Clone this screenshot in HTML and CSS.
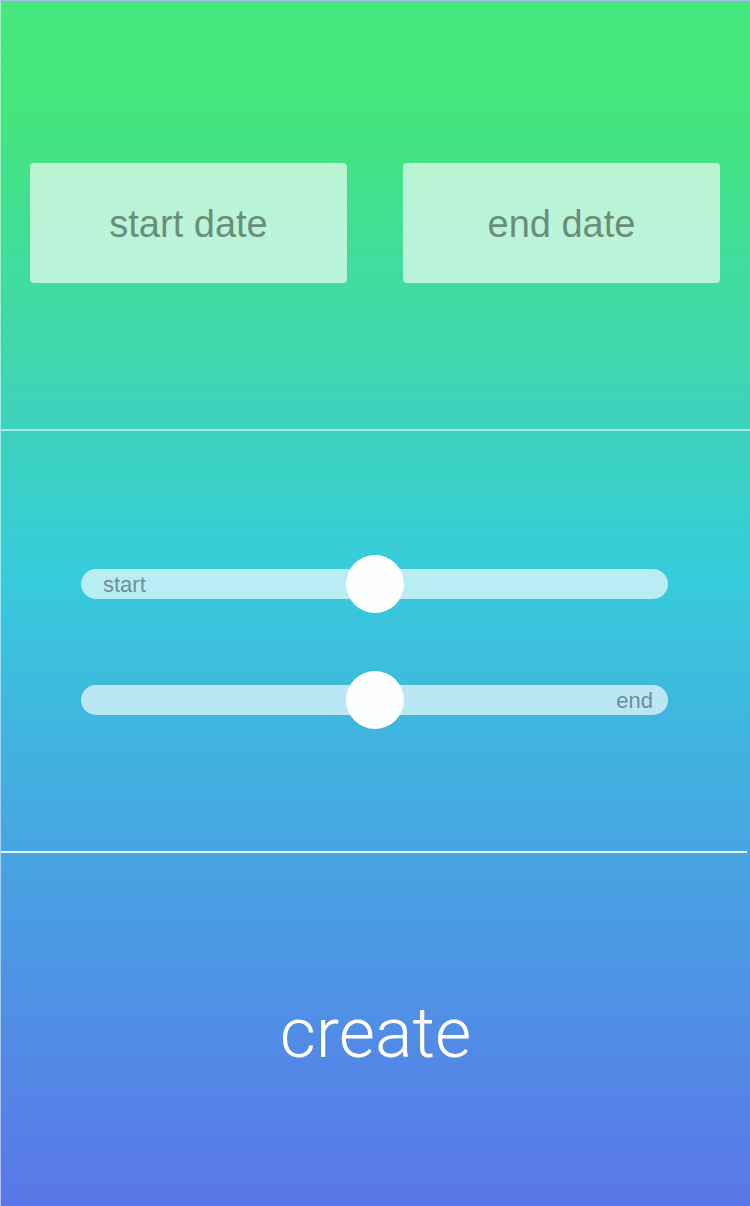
FILE: index.html
```html
<!DOCTYPE html>
<html>
<head>
<meta charset="utf-8">
<link rel="stylesheet" href="styles.css">
</head>
<body>
<div class="screen">
  <section class="dates">
    <div class="date-btn">start date</div>
    <div class="date-btn">end date</div>
  </section>
  <div class="divider"></div>
  <section class="sliders">
    <div class="slider">
      <div class="track track-start"><span class="track-label">start</span></div>
      <div class="thumb"></div>
    </div>
    <div class="slider">
      <div class="track track-end"><span class="track-label">end</span></div>
      <div class="thumb"></div>
    </div>
  </section>
  <div class="divider divider-bottom"></div>
  <section class="create">
    <span class="create-label">create</span>
  </section>
</div>
</body>
</html>
```
FILE: styles.css
```css
html, body {
  margin: 0;
  padding: 0;
}
body {
  width: 750px;
  height: 1206px;
  overflow: hidden;
  font-family: "Liberation Sans", Arial, sans-serif;
}
.screen {
  box-sizing: border-box;
  width: 750px;
  height: 1206px;
  border-top: 1px solid rgba(255, 255, 255, 0.5);
  border-left: 1px solid rgba(255, 255, 255, 0.5);
  background: linear-gradient(180deg, #45e97c 0%, #44e57f 10%, #37cbdc 48%, #42afe0 64%, #5b76e9 100%);
  display: flex;
  flex-direction: column;
}
.dates {
  box-sizing: border-box;
  height: 428px;
  display: flex;
  gap: 56px;
  padding: 162px 30px 0 29px;
}
.date-btn {
  width: 317px;
  height: 120px;
  border-radius: 4px;
  background: rgba(255, 255, 255, 0.64);
  color: #6b8e78;
  font-size: 38px;
  display: flex;
  align-items: center;
  justify-content: center;
  padding-top: 3px;
  box-sizing: border-box;
}
.divider {
  height: 2px;
  background: rgba(255, 255, 255, 0.55);
}
.divider-bottom {
  width: 746px;
  background: rgba(255, 255, 255, 0.85);
}
.sliders {
  box-sizing: border-box;
  height: 420px;
  display: flex;
  flex-direction: column;
  gap: 58px;
  padding: 124px 0 0 80px;
}
.slider {
  position: relative;
  width: 587px;
  height: 58px;
  display: flex;
  align-items: center;
}
.track {
  box-sizing: border-box;
  width: 100%;
  height: 30px;
  border-radius: 15px;
  background: rgba(255, 255, 255, 0.65);
  display: flex;
  align-items: center;
  color: rgba(60, 80, 85, 0.62);
  font-size: 22px;
  padding-top: 2px;
}
.track-start {
  padding-left: 22px;
}
.track-end {
  justify-content: flex-end;
  padding-right: 15px;
}
.thumb {
  position: absolute;
  left: 265px;
  top: 0;
  width: 58px;
  height: 58px;
  border-radius: 50%;
  background: #fdfefe;
}
.create {
  flex: 1;
  display: flex;
  align-items: center;
  justify-content: center;
  padding-top: 6px;
}
.create-label {
  font-family: Roboto, "Liberation Sans", sans-serif;
  font-weight: 300;
  font-size: 70px;
  color: #ffffff;
}
```
